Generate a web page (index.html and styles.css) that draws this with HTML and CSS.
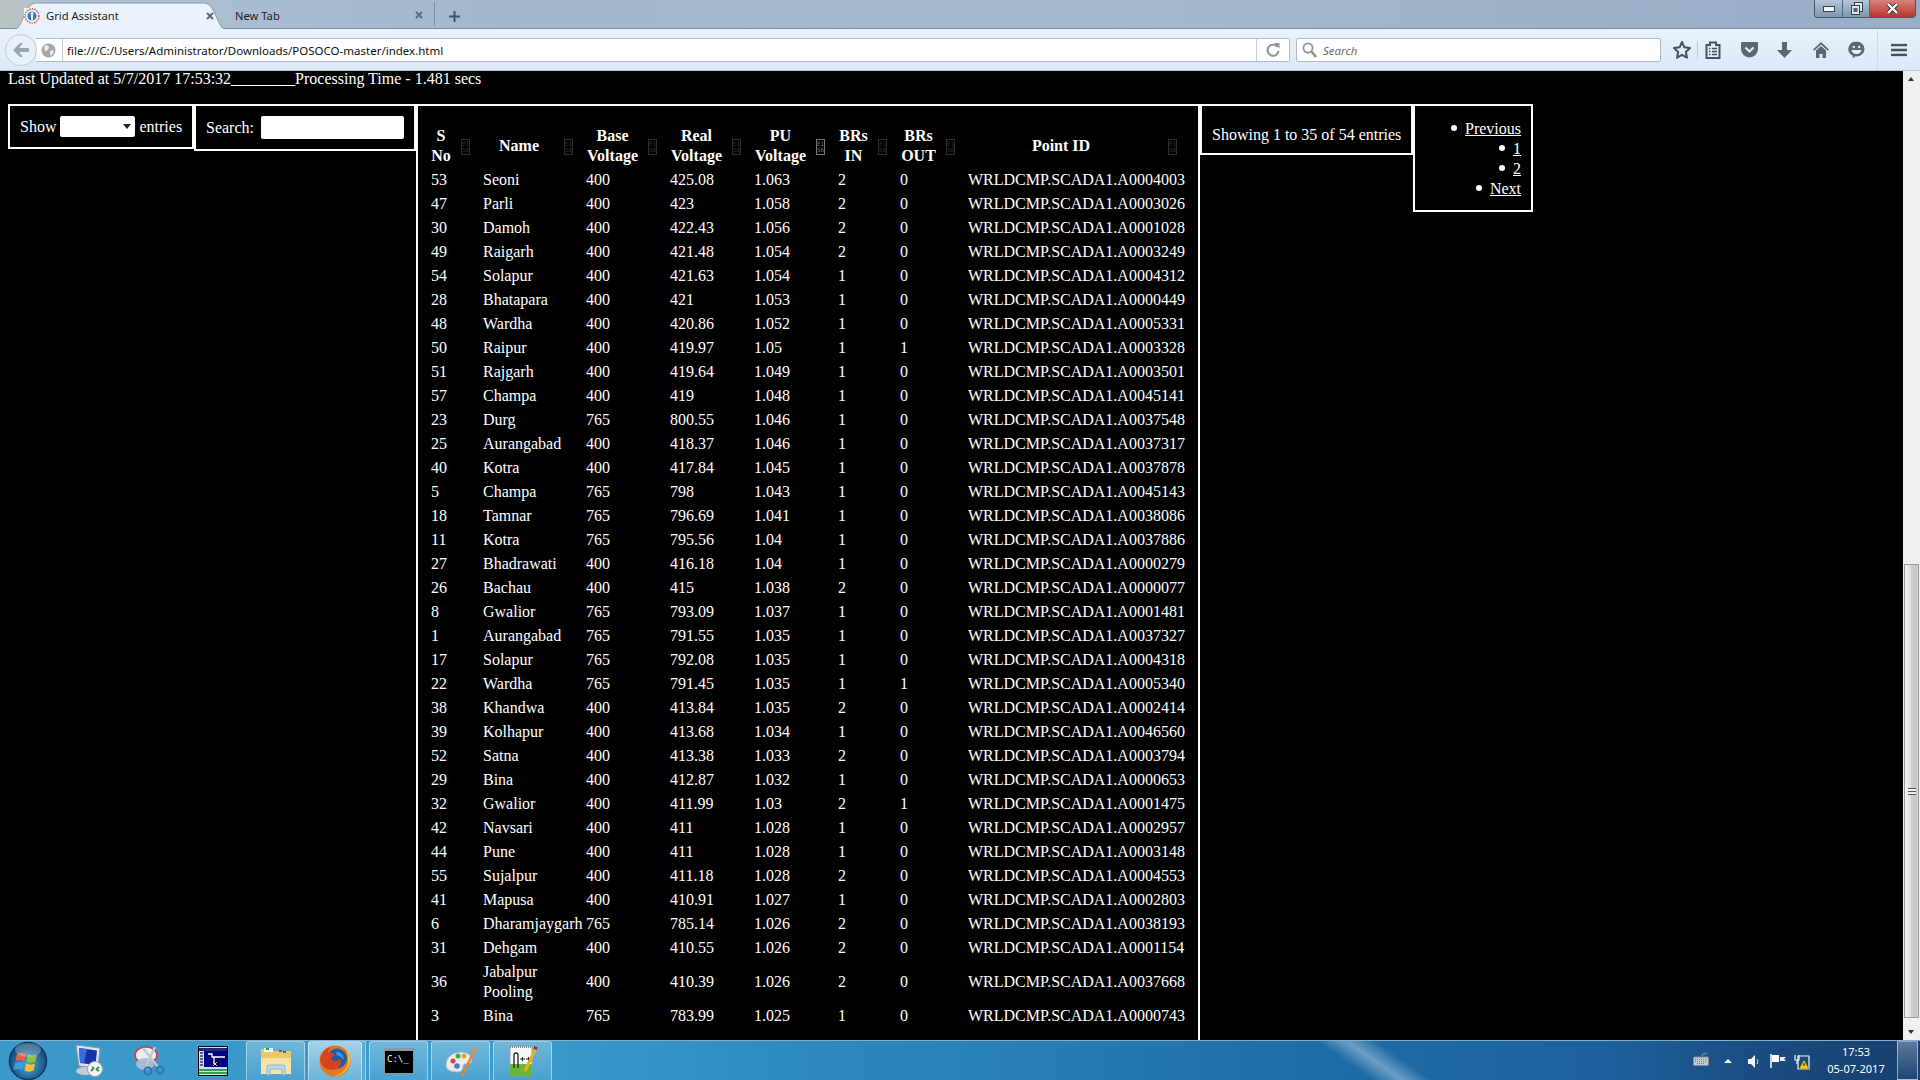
FILE: index.html
```html
<!DOCTYPE html>
<html lang="en">
<head>
<meta charset="utf-8">
<title>Grid Assistant</title>
<link rel="stylesheet" href="styles.css">
</head>
<body>
<div class="window">
  <header class="tabstrip">
    <div class="tab tab-active">
      <svg class="tab-shape" width="212" height="28" viewBox="0 0 212 28"><path d="M0 27.5C9 27.5 10 1 22 1H190C202 1 203 27.5 212 27.5Z" fill="#e9f2fd" stroke="#8798aa"/></svg>
      <svg class="favicon" width="16" height="16" viewBox="0 0 16 16"><rect width="16" height="16" fill="#f4f4f4"/><circle cx="8" cy="8" r="7" fill="none" stroke="#d8605a" stroke-width="1.6" stroke-dasharray="1.5 1"/><circle cx="8" cy="8" r="4.6" fill="#2f83c4"/><circle cx="8" cy="5.6" r="1.4" fill="#fff"/><path d="M7 7h2v5H7z" fill="#fff"/></svg>
      <span class="tab-title">Grid Assistant</span>
      <svg class="tab-close" width="8" height="8" viewBox="0 0 8 8"><path d="M1 1l6 6M7 1L1 7" stroke="#5f6b78" stroke-width="2"/></svg>
    </div>
    <div class="tab tab-idle">
      <span class="tab-title">New Tab</span>
      <svg class="tab-close" width="8" height="8" viewBox="0 0 8 8"><path d="M1 1l6 6M7 1L1 7" stroke="#5f6b78" stroke-width="2"/></svg>
    </div>
    <div class="tab-new"><svg width="11" height="11" viewBox="0 0 11 11"><path d="M5.5 0v11M0 5.5h11" stroke="#46525e" stroke-width="2"/></svg></div>
    <div class="win-controls">
      <span class="win-btn win-min"><svg width="12" height="6" viewBox="0 0 12 6"><rect x=".5" y=".5" width="11" height="5" fill="#f3f6fa" stroke="#33404e"/></svg></span>
      <span class="win-btn win-max"><svg width="13" height="13" viewBox="0 0 13 13"><rect x="4.5" y=".5" width="8" height="9" fill="#dfe8f1" stroke="#33404e"/><rect x="1.5" y="3.5" width="8" height="9" fill="#dfe8f1" stroke="#33404e"/><rect x="3.5" y="6" width="4" height="4" fill="#50606f"/></svg></span>
      <span class="win-btn win-close"><svg width="13" height="11" viewBox="0 0 13 11"><path d="M2 1l9 9M11 1l-9 9" stroke="#2c3640" stroke-width="4"/><path d="M2 1l9 9M11 1l-9 9" stroke="#fff" stroke-width="2.4"/></svg></span>
    </div>
  </header>

  <nav class="navbar">
    <div class="back-btn"><svg width="18" height="16" viewBox="0 0 18 16"><path d="M8 1L1 8l7 7h3L7 10h10V6H7l4-5z" fill="#9aa7b3"/></svg></div>
    <div class="urlbox">
      <svg class="globe" width="15" height="15" viewBox="0 0 15 15"><circle cx="7.5" cy="7.5" r="7" fill="#a3a7ab"/><path d="M3 3l3-1 2 2-1 3-3 1zM9 8l3-1 1 2-3 4-1-2z" fill="#e8eaec"/></svg>
      <span class="url-sep"></span>
      <span class="url-text">file:///C:/Users/Administrator/Downloads/POSOCO-master/index.html</span>
      <span class="url-sep url-sep-end"></span>
      <svg class="reload" width="14" height="15" viewBox="0 0 14 15"><path d="M11.5 4A5.5 5.5 0 1 0 12.5 8" fill="none" stroke="#8a95a0" stroke-width="2"/><path d="M8 0l5.5 0v5.5z" fill="#8a95a0"/></svg>
    </div>
    <div class="searchbox">
      <svg class="search-icon" width="15" height="16" viewBox="0 0 15 16"><circle cx="6" cy="6" r="4.6" fill="#fff" stroke="#8a95a0" stroke-width="1.8"/><path d="M9.5 9.5L14 15" stroke="#8a95a0" stroke-width="2.6"/></svg>
      <span class="search-text">Search</span>
    </div>
    <div class="tools">
      <svg class="tool tool-star" width="20" height="20" viewBox="0 0 20 20"><path d="M10 2l2.4 5.3 5.6.7-4.2 3.9 1.2 5.8L10 14.800l-5 2.900 1.200-5.800L2 8l5.600-.7z" fill="none" stroke="#46525e" stroke-width="2" stroke-linejoin="round"/></svg>
      <span class="tool-sep"></span>
      <svg class="tool tool-clip" width="16" height="18" viewBox="0 0 16 18"><path d="M1.500 4H5V1.500h6V4h3.500v13h-13z" fill="none" stroke="#46525e" stroke-width="2"/><path d="M4 7.500h1.500M7 7.500h5M4 10.500h1.500M7 10.500h5M4 13.500h1.500M7 13.500h5" stroke="#46525e" stroke-width="1.600"/></svg>
      <svg class="tool tool-pocket" width="17" height="16" viewBox="0 0 17 16"><path d="M1 0h15a1 1 0 0 1 1 1v6a8.500 8.500 0 0 1-17 0V1a1 1 0 0 1 1-1z" fill="#5b6873"/><path d="M4.500 5.500l4 4 4-4" fill="none" stroke="#e6eef6" stroke-width="2.200"/></svg>
      <svg class="tool tool-down" width="15" height="16" viewBox="0 0 15 16"><path d="M5 0h5v8h5l-7.500 8L0 8h5z" fill="#5b6873"/></svg>
      <svg class="tool tool-home" width="16" height="16" viewBox="0 0 16 16"><path d="M8 0l8 7.500-1.200 1.200L8 2.600 1.200 8.700 0 7.500z" fill="#5b6873"/><path d="M8 4l5 4.600V16H9.500v-4h-3v4H3V8.600z" fill="#5b6873"/></svg>
      <svg class="tool tool-chat" width="17" height="17" viewBox="0 0 17 17"><path d="M8.500 0a8 7.500 0 0 1 0 15H7l-2.500 2 .3-2.800A8 7.500 0 0 1 8.500 0z" fill="#5b6873"/><circle cx="5.800" cy="5.500" r="1.200" fill="#e6eef6"/><circle cx="11.200" cy="5.500" r="1.200" fill="#e6eef6"/><path d="M3.500 8.500h10a5 4 0 0 1-10 0z" fill="#e6eef6"/></svg>
      <span class="tool-sep tool-sep-wide"></span>
      <svg class="tool tool-menu" width="16" height="13" viewBox="0 0 16 13"><path d="M0 1.500h16M0 6.500h16M0 11.500h16" stroke="#46525e" stroke-width="2.600"/></svg>
    </div>
  </nav>

  <div class="main">
    <main class="page">
      <p class="status">Last Updated at 5/7/2017 17:53:32________Processing Time - 1.481 secs</p>
      <div class="grid-row">
        <div class="box box-length">
          <span>Show</span>
          <span class="fake-select"><span class="select-arrow"></span></span>
          <span>entries</span>
        </div>
        <div class="box box-filter">
          <label for="filter">Search:</label>
          <input id="filter" class="filter-input" type="search">
        </div>
        <div class="box box-table">
          <table class="data">
            <colgroup>
              <col class="c-sno"><col class="c-name"><col class="c-v"><col class="c-v"><col class="c-v"><col class="c-in"><col class="c-out"><col class="c-id">
            </colgroup>
            <thead>
              <tr>
                <th>S No<span class="sort"><span>E1</span><span>50</span></span></th>
                <th>Name<span class="sort"><span>E1</span><span>50</span></span></th>
                <th>Base Voltage<span class="sort"><span>E1</span><span>50</span></span></th>
                <th>Real Voltage<span class="sort"><span>E1</span><span>50</span></span></th>
                <th>PU Voltage<span class="sort sort-on"><span>E1</span><span>56</span></span></th>
                <th>BRs IN<span class="sort"><span>E1</span><span>50</span></span></th>
                <th>BRs OUT<span class="sort"><span>E1</span><span>50</span></span></th>
                <th class="th-id">Point ID<span class="sort sort-id"><span>E1</span><span>50</span></span></th>
              </tr>
            </thead>
            <tbody>
              <tr><td>53</td><td>Seoni</td><td>400</td><td>425.08</td><td>1.063</td><td>2</td><td>0</td><td>WRLDCMP.SCADA1.A0004003</td></tr>
              <tr><td>47</td><td>Parli</td><td>400</td><td>423</td><td>1.058</td><td>2</td><td>0</td><td>WRLDCMP.SCADA1.A0003026</td></tr>
              <tr><td>30</td><td>Damoh</td><td>400</td><td>422.43</td><td>1.056</td><td>2</td><td>0</td><td>WRLDCMP.SCADA1.A0001028</td></tr>
              <tr><td>49</td><td>Raigarh</td><td>400</td><td>421.48</td><td>1.054</td><td>2</td><td>0</td><td>WRLDCMP.SCADA1.A0003249</td></tr>
              <tr><td>54</td><td>Solapur</td><td>400</td><td>421.63</td><td>1.054</td><td>1</td><td>0</td><td>WRLDCMP.SCADA1.A0004312</td></tr>
              <tr><td>28</td><td>Bhatapara</td><td>400</td><td>421</td><td>1.053</td><td>1</td><td>0</td><td>WRLDCMP.SCADA1.A0000449</td></tr>
              <tr><td>48</td><td>Wardha</td><td>400</td><td>420.86</td><td>1.052</td><td>1</td><td>0</td><td>WRLDCMP.SCADA1.A0005331</td></tr>
              <tr><td>50</td><td>Raipur</td><td>400</td><td>419.97</td><td>1.05</td><td>1</td><td>1</td><td>WRLDCMP.SCADA1.A0003328</td></tr>
              <tr><td>51</td><td>Rajgarh</td><td>400</td><td>419.64</td><td>1.049</td><td>1</td><td>0</td><td>WRLDCMP.SCADA1.A0003501</td></tr>
              <tr><td>57</td><td>Champa</td><td>400</td><td>419</td><td>1.048</td><td>1</td><td>0</td><td>WRLDCMP.SCADA1.A0045141</td></tr>
              <tr><td>23</td><td>Durg</td><td>765</td><td>800.55</td><td>1.046</td><td>1</td><td>0</td><td>WRLDCMP.SCADA1.A0037548</td></tr>
              <tr><td>25</td><td>Aurangabad</td><td>400</td><td>418.37</td><td>1.046</td><td>1</td><td>0</td><td>WRLDCMP.SCADA1.A0037317</td></tr>
              <tr><td>40</td><td>Kotra</td><td>400</td><td>417.84</td><td>1.045</td><td>1</td><td>0</td><td>WRLDCMP.SCADA1.A0037878</td></tr>
              <tr><td>5</td><td>Champa</td><td>765</td><td>798</td><td>1.043</td><td>1</td><td>0</td><td>WRLDCMP.SCADA1.A0045143</td></tr>
              <tr><td>18</td><td>Tamnar</td><td>765</td><td>796.69</td><td>1.041</td><td>1</td><td>0</td><td>WRLDCMP.SCADA1.A0038086</td></tr>
              <tr><td>11</td><td>Kotra</td><td>765</td><td>795.56</td><td>1.04</td><td>1</td><td>0</td><td>WRLDCMP.SCADA1.A0037886</td></tr>
              <tr><td>27</td><td>Bhadrawati</td><td>400</td><td>416.18</td><td>1.04</td><td>1</td><td>0</td><td>WRLDCMP.SCADA1.A0000279</td></tr>
              <tr><td>26</td><td>Bachau</td><td>400</td><td>415</td><td>1.038</td><td>2</td><td>0</td><td>WRLDCMP.SCADA1.A0000077</td></tr>
              <tr><td>8</td><td>Gwalior</td><td>765</td><td>793.09</td><td>1.037</td><td>1</td><td>0</td><td>WRLDCMP.SCADA1.A0001481</td></tr>
              <tr><td>1</td><td>Aurangabad</td><td>765</td><td>791.55</td><td>1.035</td><td>1</td><td>0</td><td>WRLDCMP.SCADA1.A0037327</td></tr>
              <tr><td>17</td><td>Solapur</td><td>765</td><td>792.08</td><td>1.035</td><td>1</td><td>0</td><td>WRLDCMP.SCADA1.A0004318</td></tr>
              <tr><td>22</td><td>Wardha</td><td>765</td><td>791.45</td><td>1.035</td><td>1</td><td>1</td><td>WRLDCMP.SCADA1.A0005340</td></tr>
              <tr><td>38</td><td>Khandwa</td><td>400</td><td>413.84</td><td>1.035</td><td>2</td><td>0</td><td>WRLDCMP.SCADA1.A0002414</td></tr>
              <tr><td>39</td><td>Kolhapur</td><td>400</td><td>413.68</td><td>1.034</td><td>1</td><td>0</td><td>WRLDCMP.SCADA1.A0046560</td></tr>
              <tr><td>52</td><td>Satna</td><td>400</td><td>413.38</td><td>1.033</td><td>2</td><td>0</td><td>WRLDCMP.SCADA1.A0003794</td></tr>
              <tr><td>29</td><td>Bina</td><td>400</td><td>412.87</td><td>1.032</td><td>1</td><td>0</td><td>WRLDCMP.SCADA1.A0000653</td></tr>
              <tr><td>32</td><td>Gwalior</td><td>400</td><td>411.99</td><td>1.03</td><td>2</td><td>1</td><td>WRLDCMP.SCADA1.A0001475</td></tr>
              <tr><td>42</td><td>Navsari</td><td>400</td><td>411</td><td>1.028</td><td>1</td><td>0</td><td>WRLDCMP.SCADA1.A0002957</td></tr>
              <tr><td>44</td><td>Pune</td><td>400</td><td>411</td><td>1.028</td><td>1</td><td>0</td><td>WRLDCMP.SCADA1.A0003148</td></tr>
              <tr><td>55</td><td>Sujalpur</td><td>400</td><td>411.18</td><td>1.028</td><td>2</td><td>0</td><td>WRLDCMP.SCADA1.A0004553</td></tr>
              <tr><td>41</td><td>Mapusa</td><td>400</td><td>410.91</td><td>1.027</td><td>1</td><td>0</td><td>WRLDCMP.SCADA1.A0002803</td></tr>
              <tr><td>6</td><td>Dharamjaygarh</td><td>765</td><td>785.14</td><td>1.026</td><td>2</td><td>0</td><td>WRLDCMP.SCADA1.A0038193</td></tr>
              <tr><td>31</td><td>Dehgam</td><td>400</td><td>410.55</td><td>1.026</td><td>2</td><td>0</td><td>WRLDCMP.SCADA1.A0001154</td></tr>
              <tr><td>36</td><td>Jabalpur Pooling</td><td>400</td><td>410.39</td><td>1.026</td><td>2</td><td>0</td><td>WRLDCMP.SCADA1.A0037668</td></tr>
              <tr><td>3</td><td>Bina</td><td>765</td><td>783.99</td><td>1.025</td><td>1</td><td>0</td><td>WRLDCMP.SCADA1.A0000743</td></tr>
            </tbody>
          </table>
        </div>
        <div class="box box-info">Showing 1 to 35 of 54 entries</div>
        <div class="box box-pages">
          <ul class="pages">
            <li><a href="#">Previous</a></li>
            <li><a href="#">1</a></li>
            <li><a href="#">2</a></li>
            <li><a href="#">Next</a></li>
          </ul>
        </div>
      </div>
    </main>
    <aside class="scrollbar">
      <span class="arrow-up"></span>
      <div class="thumb"><span class="grip"></span></div>
      <span class="arrow-down"></span>
    </aside>
  </div>

  <footer class="taskbar">
    <span class="streak"></span>
    <svg class="orb" width="40" height="40" viewBox="0 0 40 40"><defs><radialGradient id="orbg" cx="50%" cy="60%" r="60%"><stop offset="0" stop-color="#4aa8dc"/><stop offset="1" stop-color="#0c3f6e"/></radialGradient></defs><circle cx="20" cy="20" r="18.500" fill="url(#orbg)" stroke="#123a5c" stroke-width="1.500"/><path d="M9 13c3-1.500 6-1.500 9 0l-1.500 7c-3-1.500-6-1.500-9 0z" fill="#e8613a"/><path d="M20 13.500c3 1.500 6 1.500 9 0l-1.500 7c-3 1.500-6 1.500-9 0z" fill="#8cc440"/><path d="M7 22c3-1.500 6-1.500 9 0l-1.500 7c-3-1.500-6-1.500-9 0z" fill="#3f9de0"/><path d="M18 22.500c3 1.500 6 1.500 9 0l-1.500 7c-3 1.500-6 1.500-9 0z" fill="#f7c02c"/><ellipse cx="20" cy="9" rx="13" ry="7" fill="#fff" opacity=".25"/></svg>
    <div class="pins">
      <svg class="pin" width="34" height="34" viewBox="0 0 34 34"><path d="M5 1l24 3-2 20-19-2z" fill="#dfe6ee" stroke="#8c97a4"/><path d="M8 4l18 2.500-1.500 14.500L9 19z" fill="#1533a8"/><path d="M8 4l8 1-3 14-4-.5z" fill="#3a6be0"/><ellipse cx="14" cy="27" rx="9" ry="4" fill="#c8ccd2"/><circle cx="24" cy="25" r="7.500" fill="#f2f4f6" stroke="#9aa3ad"/><path d="M20 27l3-3M25 26l3-3M21 23l2 1M28 27l-2-1" stroke="#2c9a3c" stroke-width="1.800"/></svg>
      <svg class="pin" width="34" height="34" viewBox="0 0 34 34"><ellipse cx="12" cy="11" rx="11" ry="8" fill="#eceff2" stroke="#d43c3c" stroke-width="1.600"/><ellipse cx="11" cy="20" rx="9" ry="6" fill="#a4bcd8"/><path d="M9 4l15 19M21 3L12 22" stroke="#c2c8cf" stroke-width="2.400"/><circle cx="14" cy="27" r="3.500" fill="none" stroke="#2f72b8" stroke-width="2"/><circle cx="26" cy="26" r="3.500" fill="none" stroke="#2f72b8" stroke-width="2"/></svg>
      <svg class="pin pin-grid" width="30" height="30" viewBox="0 0 30 30"><rect width="30" height="30" fill="#000"/><rect x="1" y="1" width="28" height="28" fill="#d7dce2"/><rect x="1" y="2" width="28" height="3" fill="#1a2a7a"/><rect x="6" y="5" width="23" height="16" fill="#00007e"/><path d="M10 8h4v3h13M16 11v7" stroke="#fff" stroke-width="1.300" fill="none"/><path d="M15 16l4 4M19 16l-4 4" stroke="#ffe64d" stroke-width="1"/><path d="M2 7h3M2 10h3M2 13h3M2 16h3M2 19h3" stroke="#2a3a8a" stroke-width="1.400"/><rect x="1" y="23" width="28" height="2" fill="#2ea54a"/><rect x="1" y="26" width="28" height="2" fill="#2ea54a"/></svg>
    </div>
    <div class="tasks">
      <div class="task task-folder"><svg width="34" height="32" viewBox="0 0 34 32"><path d="M2 4h10l2 2h18v22H2z" fill="#e9c96a"/><rect x="5" y="3" width="9" height="4" fill="#f7f7ee"/><rect x="7" y="3" width="3" height="2" fill="#2ea54a"/><rect x="24" y="6" width="3" height="2" fill="#2f72c8"/><rect x="20" y="5" width="3" height="2" fill="#d43c3c"/><path d="M2 13h30v16H2z" fill="#f7e3a6"/><path d="M8 30V22a2 2 0 0 1 2-2h14a2 2 0 0 1 2 2v8h-3v-6H11v6z" fill="#b8dcf0" stroke="#6fa8cc" stroke-width=".7"/></svg></div>
      <div class="task task-fox task-on"><svg width="32" height="32" viewBox="0 0 32 32"><circle cx="16" cy="16" r="15.500" fill="#e8761f"/><circle cx="18" cy="13.500" r="10" fill="#1b5fa8"/><path d="M17 7c5 0 8 3 8 8 0 0-2-3-5-4-2-.5-3-2-3-4z" fill="#3f97d8"/><path d="M1 14C3 7 7 3 12 2c-2 2-3 4-3 6 3-1 6 0 7 3-2 0-4 1-4 3 2 3 7 2 10 0 1 5-3 11-9 11C7 25 2 21 1 14z" fill="#d8421f"/><path d="M27 4c4 4 5 9 4 14-2 8-9 13-16 13 8-2 14-8 14-15 0-5-1-8-2-12z" fill="#fbb829"/></svg></div>
      <div class="task-sliver"></div>
      <div class="task task-cmd"><svg width="30" height="26" viewBox="0 0 30 26"><rect width="30" height="26" fill="#8c96a0"/><rect x="1" y="3" width="28" height="22" fill="#000"/><text class="cmd-text" x="3" y="14">C:\_</text></svg></div>
      <div class="task task-paint"><svg width="34" height="32" viewBox="0 0 34 32"><path d="M2 20c0-8 7-13 15-13 6 0 11 3 11 8 0 3-3 4-6 4-2 0-3 1-3 3 0 3-2 5-6 5-6 0-11-2-11-7z" fill="#e9edf1" stroke="#a8b2bc"/><circle cx="9" cy="16" r="2.500" fill="#d8443c"/><circle cx="14" cy="11" r="2.500" fill="#49a840"/><circle cx="20" cy="11" r="2.500" fill="#e0a830"/><circle cx="13" cy="21" r="2.800" fill="#3f80c8"/><path d="M30 6L18 31" stroke="#e8862a" stroke-width="2.400"/><path d="M27 7l3-6 3 2 -2 6z" fill="#c89a60"/></svg></div>
      <div class="task task-npp"><svg width="30" height="34" viewBox="0 0 30 34"><path d="M2 2h22v30H2z" fill="#f5f7f4" stroke="#9aa39a"/><path d="M2 20h22v12H2z" fill="#67b73a"/><path d="M2 3h22" stroke="#888" stroke-dasharray="1 1" stroke-width="2"/><path d="M6 24V11a2 2 0 0 1 4 0v13" fill="none" stroke="#222" stroke-width="1.300"/><path d="M12 15h5M14.500 13v4M18 15h5M20.500 13v4" stroke="#222"/><path d="M28 4L17 27" stroke="#e8b020" stroke-width="3"/><path d="M26.500 2l3 1.500-1 2.500-3-1.500z" fill="#8a2a2a"/></svg></div>
    </div>
    <div class="tray">
      <svg class="tray-kb" width="16" height="14" viewBox="0 0 16 14"><path d="M9 4c0-3 2-1 5-3" fill="none" stroke="#9aa7b4"/><rect x=".5" y="5" width="15" height="8.500" rx="1" fill="#c6ccd2" stroke="#7f8a95"/><path d="M2 7.500h12M2 9.500h12M4 11.500h8" stroke="#6f7a85" stroke-dasharray="1 1"/></svg>
      <span class="tray-caret"></span>
      <svg class="tray-speaker" width="13" height="13" viewBox="0 0 13 13"><path d="M0 4h3l4-4v13l-4-4H0z" fill="#f2f4f6"/><path d="M9 4c1 1.500 1 3.500 0 5" fill="none" stroke="#dfe4ea"/></svg>
      <svg class="tray-flag" width="16" height="14" viewBox="0 0 16 14"><path d="M1 0v14" stroke="#fff" stroke-width="1.500"/><path d="M2 1h7v7H2z" fill="#fff"/><path d="M10 3h6l-2 2 2 2h-6z" fill="#e8edf2"/></svg>
      <svg class="tray-net" width="16" height="16" viewBox="0 0 16 16"><path d="M4 2h11v13H4z" fill="none" stroke="#f2f4f6" stroke-width="1.200"/><path d="M1 1v5h4V1M3 6v4" stroke="#f2f4f6" stroke-width="1.200" fill="none"/><path d="M10 6l5 9H5z" fill="#f7d01c" stroke="#705c00" stroke-width=".5"/><path d="M10 9v3" stroke="#222" stroke-width="1.200"/></svg>
      <div class="clock"><span>17:53</span><span>05-07-2017</span></div>
      <span class="show-desktop"></span>
    </div>
  </footer>
</div>
</body>
</html>
```
FILE: styles.css
```css
* { box-sizing: border-box; }
html, body { margin: 0; height: 100%; overflow: hidden; background: #000; }
.window { display: flex; flex-direction: column; height: 1080px; width: 1920px; overflow: hidden; }

/* tab strip */
.tabstrip {
  height: 29px; flex: none; display: flex; align-items: flex-end; padding-left: 14px;
  background: linear-gradient(90deg, #b9c4c0 0, #aebfd2 60px, #a3b8cf 500px, #a6bacf 1100px, #9db2c9 1500px, #98aec6 100%);
  border-bottom: 1px solid #7e8fa1;
}
.tab { display: flex; align-items: center; height: 27px; position: relative; font: 11.2px "Noto Sans", sans-serif; color: #1b1f24; }
.tab-active { width: 212px; padding: 0 0 0 32px; margin-bottom: -1px; }
.tab-shape { position: absolute; left: 0; top: 0; }
.favicon { position: absolute; left: 10px; top: 6px; }
.tab-title { position: relative; white-space: nowrap; }
.tab-close { position: absolute; right: 12px; top: 10px; }
.tab-idle { width: 209px; padding: 2px 0 0 9px; border-right: 1px solid #7e8fa1; height: 24px; margin-bottom: 2px; }
.tab-idle .tab-close { top: 9px; right: 11px; }
.tab-new { width: 38px; display: flex; justify-content: center; padding-bottom: 6px; }
.win-controls {
  margin-left: auto; margin-right: 4px; align-self: flex-start; display: flex; width: 102px; height: 18px;
  border: 1px solid #46566a; border-top: 0; border-radius: 0 0 4px 4px; overflow: hidden;
}
.win-btn { display: flex; align-items: center; justify-content: center; border-right: 1px solid #52667c; background: linear-gradient(#b5c6d8, #7f96ae); }
.win-min { width: 28px; }
.win-max { width: 27px; }
.win-close { flex: 1; border-right: 0; background: linear-gradient(#d8847c, #b8322c); }

/* nav bar */
.navbar {
  height: 42px; flex: none; display: flex; align-items: center; position: relative; padding: 1px 0 0 36px;
  background: linear-gradient(#e9f2fc, #dbe8f6); border-bottom: 1px solid #b7c6d6;
}
.back-btn {
  position: absolute; left: 5px; top: 5px; width: 32px; height: 32px; border-radius: 50%; z-index: 1;
  background: #e8f0f9; border: 1px solid #bfcddd; display: flex; align-items: center; justify-content: center;
}
.urlbox {
  width: 1254px; height: 24px; background: #fff; border: 1px solid #a9bccf; border-left: 0; border-radius: 0 2px 2px 0;
  display: flex; align-items: center; padding-left: 5px;
  font: 11.5px "Noto Sans", sans-serif; color: #111;
}
.globe { margin-right: 6px; }
.url-sep { width: 1px; height: 22px; background: #c5d0da; }
.url-text { margin-left: 4px; white-space: nowrap; }
.url-sep-end { margin-left: auto; }
.reload { margin: 0 9px 0 9px; }
.searchbox {
  width: 365px; height: 24px; margin-left: 6px; background: #fff; border: 1px solid #a9bccf; border-radius: 2px;
  display: flex; align-items: center; padding-left: 5px;
}
.search-text { margin-left: 6px; font: italic 11.5px "Noto Sans", sans-serif; color: #6d6d6d; }
.tools { display: flex; align-items: center; height: 100%; flex: 1; position: relative; }
.tool { position: absolute; top: 50%; transform: translateY(-50%); }
.tool-star { left: 11px; }
.tool-sep { position: absolute; left: 36px; top: 11px; width: 1px; height: 18px; background: #bccad8; }
.tool-sep-wide { left: 216px; top: 0; height: 40px; background: #ccd9e6; }
.tool-clip { left: 44px; }
.tool-pocket { left: 80px; }
.tool-down { left: 116px; }
.tool-home { left: 152px; }
.tool-chat { left: 187px; }
.tool-menu { left: 230px; }

/* page */
.main { flex: 1; min-height: 0; display: flex; }
.page {
  flex: 1; min-width: 0; overflow: hidden; background: #000; color: #fff;
  font: 16px/20px "Liberation Serif", "Times New Roman", serif;
}
.status { margin: 0; height: 33px; padding-left: 8px; line-height: 15px; white-space: nowrap; }
.grid-row { display: flex; align-items: flex-start; padding-left: 8px; }
.box { border: 2px solid #fff; flex: none; }
.box-length { width: 186px; height: 45px; display: flex; align-items: center; gap: 4px; padding-left: 10px; }
.fake-select { width: 75px; height: 21px; background: #fff; border-radius: 2px; position: relative; display: block; }
.select-arrow { position: absolute; right: 4px; top: 8px; border: 4px solid transparent; border-top: 5px solid #222; border-bottom: 0; }
.box-filter { width: 222px; height: 47px; display: flex; align-items: center; gap: 7px; padding-left: 10px; }
.filter-input { width: 143px; height: 23px; border: 0; border-radius: 2px; background: #fff; padding: 0; outline: 0; appearance: none; }
.box-table { width: 784px; padding-bottom: 20px; }
.data { border-collapse: collapse; table-layout: fixed; width: 780px; }
.c-sno { width: 56px; }
.c-name { width: 103px; }
.c-v { width: 84px; }
.c-in { width: 62px; }
.c-out { width: 68px; }
.c-id { width: 239px; }
th { position: relative; padding: 20px 22px 2px 9px; text-align: center; font-weight: bold; }
td { padding: 2px 0 2px 9px; text-align: left; white-space: normal; }
th:first-child { padding-left: 12px; }
td:first-child { padding-left: 13px; }
.th-id { padding-right: 44px; }
.sort {
  position: absolute; right: 4px; top: 33px; width: 9px; height: 16px; border: 1px solid #2e2e2e;
  display: flex; flex-direction: column; align-items: center; justify-content: center; color: #333;
  font: 6px/6px "DejaVu Sans Mono", monospace;
}
.sort-on { color: #777; border-color: #777; }
.sort-id { right: 21px; }
.box-info { width: 213px; height: 51px; padding: 19px 0 0 10px; white-space: nowrap; }
.box-pages { width: 120px; height: 108px; padding: 13px 10px 0 0; }
.pages { margin: 0; padding: 0; list-style: none; text-align: right; }
.pages li::before {
  content: ""; display: inline-block; width: 6px; height: 6px; border-radius: 50%;
  background: #fff; margin-right: 8px; vertical-align: 3px;
}
.pages a { color: #fff; text-decoration: underline; }

/* scrollbar */
.scrollbar { width: 17px; flex: none; background: #f0f0f0; position: relative; }
.arrow-up, .arrow-down { position: absolute; left: 5px; border: 3.500px solid transparent; }
.arrow-up { top: 6px; border-bottom: 4px solid #333; border-top: 0; }
.arrow-down { bottom: 6px; border-top: 4px solid #333; border-bottom: 0; }
.thumb {
  position: absolute; left: 1px; right: 1px; top: 493px; height: 454px; border: 1px solid #9a9a9a;
  background: linear-gradient(90deg, #f4f4f4, #e4e4e4 40%, #cfcfcf 50%, #c6c6c6 90%, #dedede);
  display: flex; align-items: center; justify-content: center;
}
.grip { width: 8px; height: 7px; border-top: 1px solid #555; border-bottom: 1px solid #555; background: linear-gradient(#f0f0f0 0 2px, #555 2px 3px, #f0f0f0 3px); }

/* taskbar */
.taskbar {
  height: 40px; flex: none; display: flex; align-items: stretch; position: relative; overflow: hidden;
  background: linear-gradient(90deg, #3b98c8 0, #3b9ccd 500px, #2d8ac0 800px, #1e6ea8 1300px, #1d619e 1600px, #1b4d82 1750px, #173e6e 100%);
  border-top: 1px solid #7fb0cf;
}
.streak { position: absolute; left: 1345px; top: -2px; width: 60px; height: 44px; background: linear-gradient(90deg, transparent, rgba(255,255,255,.35), transparent); transform: skewX(55deg); }
.orb { position: relative; margin: 0 0 0 8px; flex: none; }
.pins { display: flex; align-items: center; width: 198px; padding-left: 23px; gap: 29px; position: relative; }
.pin-grid { margin-left: 1px; }
.tasks { display: flex; gap: 3px; position: relative; }
.task {
  width: 59px; display: flex; align-items: center; justify-content: center;
  border: 1px solid rgba(255,255,255,.45); border-bottom: 0; border-radius: 3px 3px 0 0;
  background: linear-gradient(rgba(255,255,255,.28), rgba(255,255,255,.08));
}
.task-on { width: 54px; background: linear-gradient(rgba(255,255,255,.55), rgba(255,255,255,.25)); }
.task-sliver { width: 4px; margin-left: -3px; border: 1px solid rgba(255,255,255,.45); border-left: 0; border-bottom: 0; background: rgba(255,255,255,.15); }
.cmd-text { font: 9px "DejaVu Sans Mono", monospace; fill: #fff; }
.tray { margin-left: auto; display: flex; align-items: center; position: relative; width: 223px; }
.tray svg, .tray-caret { position: absolute; }
.tray-kb { left: -4px; top: 11px; }
.tray-caret { left: 27px; top: 18px; border: 4px solid transparent; border-bottom: 4px solid #f0f4f8; border-top: 0; }
.tray-speaker { left: 51px; top: 14px; }
.tray-flag { left: 73px; top: 13px; }
.tray-net { left: 97px; top: 13px; }
.clock {
  position: absolute; left: 120px; top: 2px; width: 78px; text-align: center; color: #fff;
  font: 11px/17px "Noto Sans", sans-serif; display: flex; flex-direction: column;
}
.show-desktop { position: absolute; right: 2px; top: 0; bottom: 0; width: 21px; border: 1px solid rgba(255,255,255,.5); background: linear-gradient(rgba(255,255,255,.3), rgba(255,255,255,.03)); }
```
